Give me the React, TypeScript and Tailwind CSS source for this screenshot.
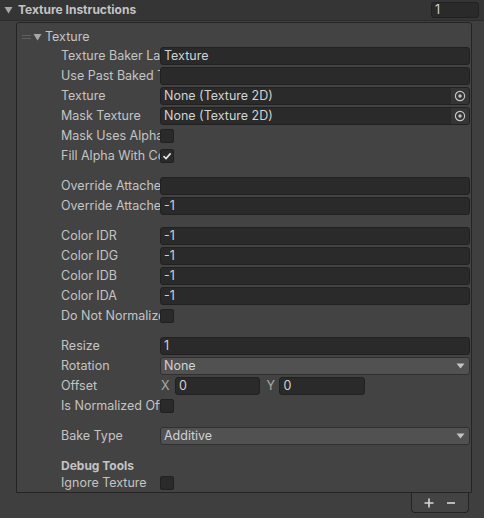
import React from "react";

const font = { fontFamily: "Inter, 'Noto Sans', sans-serif" };

function Tri({ className = "" }: { className?: string }) {
  return (
    <svg width="9" height="8" viewBox="0 0 9 8" className={className}>
      <path d="M0.5 1 L8.5 1 L4.5 7.5 Z" fill="#a8a8a8" />
    </svg>
  );
}

function Label({ children }: { children: React.ReactNode }) {
  return (
    <div className="w-[99px] shrink-0 overflow-hidden whitespace-nowrap text-[12.5px] leading-[18px] text-[#c4c4c4]">
      {children}
    </div>
  );
}

function Row({ label, children }: { label: string; children?: React.ReactNode }) {
  return (
    <div className="flex items-center h-[18px] mb-[2px] pl-[44px] pr-[1px]">
      <Label>{label}</Label>
      <div className="flex-1 flex items-center h-full">{children}</div>
    </div>
  );
}

function TextField({ value = "" }: { value?: string }) {
  return (
    <div className="flex-1 h-[18px] rounded-[3px] bg-[#2a2a2a] border border-[#212121] px-[3px] text-[12.5px] leading-[16px] text-[#d2d2d2] overflow-hidden whitespace-nowrap">
      {value}
    </div>
  );
}

function ObjectField({ value }: { value: string }) {
  return (
    <div className="flex-1 h-[18px] rounded-[3px] bg-[#2a2a2a] border border-[#212121] flex items-center overflow-hidden">
      <span className="flex-1 px-[3px] text-[12.5px] leading-[16px] text-[#d2d2d2] whitespace-nowrap">{value}</span>
      <span className="w-[18px] h-full bg-[#353535] flex items-center justify-center">
        <svg width="12" height="12" viewBox="0 0 12 12">
          <circle cx="6" cy="6" r="4.6" fill="none" stroke="#c4c4c4" strokeWidth="1.2" />
          <circle cx="6" cy="6" r="1.7" fill="#c4c4c4" />
        </svg>
      </span>
    </div>
  );
}

function Check({ checked = false }: { checked?: boolean }) {
  return (
    <div className="w-[14px] h-[14px] rounded-[2px] bg-[#2a2a2a] border border-[#212121] flex items-center justify-center">
      {checked && (
        <svg width="10" height="10" viewBox="0 0 10 10">
          <path d="M1.5 5.2 L4 7.5 L8.6 2.4" fill="none" stroke="#e8e8e8" strokeWidth="1.6" />
        </svg>
      )}
    </div>
  );
}

function Popup({ value }: { value: string }) {
  return (
    <div className="flex-1 h-[18px] rounded-[3px] bg-[#515151] border border-[#303030] flex items-center pl-[3px] pr-[4px]">
      <span className="flex-1 text-[12.5px] leading-[16px] text-[#d2d2d2]">{value}</span>
      <svg width="9" height="6" viewBox="0 0 9 6">
        <path d="M0.5 0.5 L8.5 0.5 L4.5 5.5 Z" fill="#c4c4c4" />
      </svg>
    </div>
  );
}

function Spacer() {
  return <div className="h-[10px]" />;
}

export default function App() {
  return (
    <div style={font} className="w-[484px] h-[518px] bg-[#3f3f3f] overflow-hidden select-none">
      {/* header */}
      <div className="h-[21px] bg-[#353535] border-b border-[#2c2c2c] flex items-center pl-[4px] pr-[5px]">
        <Tri />
        <span className="ml-[5px] text-[12px] font-bold text-[#c4c4c4]">Texture Instructions</span>
        <div className="ml-auto w-[48px] h-[16px] rounded-[3px] bg-[#2a2a2a] border border-[#212121] px-[3px] text-[12.5px] leading-[14px] text-[#d2d2d2]">
          1
        </div>
      </div>

      <div className="pl-[16px] pr-[12px] pt-[1px]">
        {/* list box */}
        <div className="bg-[#434343] border border-[#242424] rounded-t-[3px] pt-[5px]">
          <div className="flex items-center h-[18px] mb-[1px] pl-[5px]">
            <div className="flex flex-col gap-[2px] w-[9px]">
              <div className="h-[1px] bg-[#5f5f5f]" />
              <div className="h-[1px] bg-[#5f5f5f]" />
            </div>
            <Tri className="ml-[2px]" />
            <span className="ml-[3px] text-[12.5px] text-[#c4c4c4]">Texture</span>
          </div>

          <Row label="Texture Baker Layer Name"><TextField value="Texture" /></Row>
          <Row label="Use Past Baked Texture"><TextField /></Row>
          <Row label="Texture"><ObjectField value="None (Texture 2D)" /></Row>
          <Row label="Mask Texture"><ObjectField value="None (Texture 2D)" /></Row>
          <Row label="Mask Uses Alpha"><Check /></Row>
          <Row label="Fill Alpha With Color"><Check checked /></Row>
          <Spacer />
          <Row label="Override Attached Layer"><TextField /></Row>
          <Row label="Override Attached Index"><TextField value="-1" /></Row>
          <Spacer />
          <Row label="Color IDR"><TextField value="-1" /></Row>
          <Row label="Color IDG"><TextField value="-1" /></Row>
          <Row label="Color IDB"><TextField value="-1" /></Row>
          <Row label="Color IDA"><TextField value="-1" /></Row>
          <Row label="Do Not Normalize"><Check /></Row>
          <Spacer />
          <Row label="Resize"><TextField value="1" /></Row>
          <Row label="Rotation"><Popup value="None" /></Row>
          <Row label="Offset">
            <div className="flex items-center w-[205px]">
              <span className="w-[15px] pl-[1px] text-[12.5px] text-[#a8a8a8]">X</span>
              <div className="w-[86px] flex"><TextField value="0" /></div>
              <span className="w-[19px] pl-[6px] text-[12.5px] text-[#a8a8a8]">Y</span>
              <div className="w-[86px] flex"><TextField value="0" /></div>
            </div>
          </Row>
          <Row label="Is Normalized Offset"><Check /></Row>
          <Spacer />
          <Row label="Bake Type"><Popup value="Additive" /></Row>
          <div className="h-[10px]" />
          <div className="h-[17px] pl-[44px] flex items-center text-[12px] font-bold text-[#c4c4c4]">Debug Tools</div>
          <div className="flex items-center h-[18px] pl-[44px]">
            <Label>Ignore Texture</Label>
            <Check />
          </div>
        </div>

        {/* footer +/- */}
        <div className="flex justify-end pr-[3px]">
          <div className="w-[58px] h-[20px] bg-[#434343] border border-t-0 border-[#242424] rounded-b-[4px] flex items-center justify-around px-[6px]">
            <svg width="10" height="10" viewBox="0 0 10 10">
              <path d="M5 0.5 V9.5 M0.5 5 H9.5" stroke="#d8d8d8" strokeWidth="1.6" />
            </svg>
            <svg width="10" height="10" viewBox="0 0 10 10">
              <path d="M1 5 H9" stroke="#d8d8d8" strokeWidth="1.6" />
            </svg>
          </div>
        </div>
      </div>
    </div>
  );
}
